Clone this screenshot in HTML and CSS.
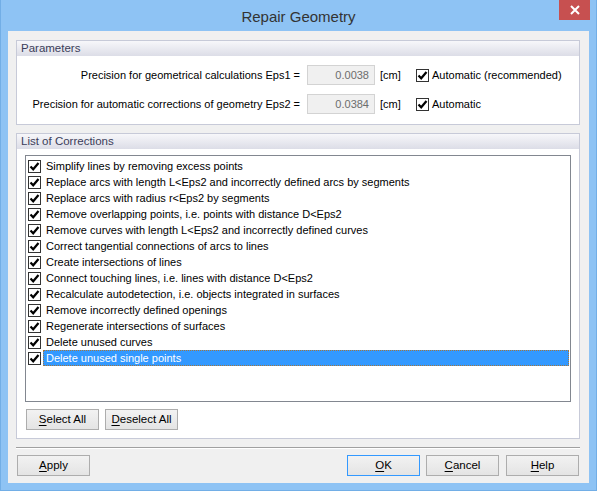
FILE: index.html
```html
<!DOCTYPE html>
<html>
<head>
<meta charset="utf-8">
<link rel="stylesheet" href="styles.css">
</head>
<body>
<div class="window">
  <div class="titlebar">
    <div class="title">Repair Geometry</div>
    <div class="close"><svg width="10" height="10" viewBox="0 0 10 10"><path d="M1 1 L9 9 M9 1 L1 9" stroke="#fff" stroke-width="2"/></svg></div>
  </div>
  <div class="client">
    <div class="group">
      <div class="group-head">Parameters</div>
      <div class="group-body params">
        <div class="plabel">Precision for geometrical calculations Eps1 =</div>
        <div class="pinput">0.0038</div>
        <div class="punit">[cm]</div>
        <div class="pcheck"><span class="cb"><svg width="11" height="11" viewBox="0 0 11 11"><path d="M1.5 5.5 L4.2 8.3 L9.5 2" fill="none" stroke="#000" stroke-width="2.2"/></svg></span><span>Automatic (recommended)</span></div>
        <div class="plabel">Precision for automatic corrections of geometry Eps2 =</div>
        <div class="pinput">0.0384</div>
        <div class="punit">[cm]</div>
        <div class="pcheck"><span class="cb"><svg width="11" height="11" viewBox="0 0 11 11"><path d="M1.5 5.5 L4.2 8.3 L9.5 2" fill="none" stroke="#000" stroke-width="2.2"/></svg></span><span>Automatic</span></div>
      </div>
    </div>
    <div class="group group-list">
      <div class="group-head">List of Corrections</div>
      <div class="group-body listbody">
        <div class="listbox">
          <div class="item"><span class="cb"><svg width="11" height="11" viewBox="0 0 11 11"><path d="M1.5 5.5 L4.2 8.3 L9.5 2" fill="none" stroke="#000" stroke-width="2.2"/></svg></span><span class="lbl">Simplify lines by removing excess points</span></div>
          <div class="item"><span class="cb"><svg width="11" height="11" viewBox="0 0 11 11"><path d="M1.5 5.5 L4.2 8.3 L9.5 2" fill="none" stroke="#000" stroke-width="2.2"/></svg></span><span class="lbl">Replace arcs with length L&lt;Eps2 and incorrectly defined arcs by segments</span></div>
          <div class="item"><span class="cb"><svg width="11" height="11" viewBox="0 0 11 11"><path d="M1.5 5.5 L4.2 8.3 L9.5 2" fill="none" stroke="#000" stroke-width="2.2"/></svg></span><span class="lbl">Replace arcs with radius r&lt;Eps2 by segments</span></div>
          <div class="item"><span class="cb"><svg width="11" height="11" viewBox="0 0 11 11"><path d="M1.5 5.5 L4.2 8.3 L9.5 2" fill="none" stroke="#000" stroke-width="2.2"/></svg></span><span class="lbl">Remove overlapping points, i.e. points with distance D&lt;Eps2</span></div>
          <div class="item"><span class="cb"><svg width="11" height="11" viewBox="0 0 11 11"><path d="M1.5 5.5 L4.2 8.3 L9.5 2" fill="none" stroke="#000" stroke-width="2.2"/></svg></span><span class="lbl">Remove curves with length L&lt;Eps2 and incorrectly defined curves</span></div>
          <div class="item"><span class="cb"><svg width="11" height="11" viewBox="0 0 11 11"><path d="M1.5 5.5 L4.2 8.3 L9.5 2" fill="none" stroke="#000" stroke-width="2.2"/></svg></span><span class="lbl">Correct tangential connections of arcs to lines</span></div>
          <div class="item"><span class="cb"><svg width="11" height="11" viewBox="0 0 11 11"><path d="M1.5 5.5 L4.2 8.3 L9.5 2" fill="none" stroke="#000" stroke-width="2.2"/></svg></span><span class="lbl">Create intersections of lines</span></div>
          <div class="item"><span class="cb"><svg width="11" height="11" viewBox="0 0 11 11"><path d="M1.5 5.5 L4.2 8.3 L9.5 2" fill="none" stroke="#000" stroke-width="2.2"/></svg></span><span class="lbl">Connect touching lines, i.e. lines with distance D&lt;Eps2</span></div>
          <div class="item"><span class="cb"><svg width="11" height="11" viewBox="0 0 11 11"><path d="M1.5 5.5 L4.2 8.3 L9.5 2" fill="none" stroke="#000" stroke-width="2.2"/></svg></span><span class="lbl">Recalculate autodetection, i.e. objects integrated in surfaces</span></div>
          <div class="item"><span class="cb"><svg width="11" height="11" viewBox="0 0 11 11"><path d="M1.5 5.5 L4.2 8.3 L9.5 2" fill="none" stroke="#000" stroke-width="2.2"/></svg></span><span class="lbl">Remove incorrectly defined openings</span></div>
          <div class="item"><span class="cb"><svg width="11" height="11" viewBox="0 0 11 11"><path d="M1.5 5.5 L4.2 8.3 L9.5 2" fill="none" stroke="#000" stroke-width="2.2"/></svg></span><span class="lbl">Regenerate intersections of surfaces</span></div>
          <div class="item"><span class="cb"><svg width="11" height="11" viewBox="0 0 11 11"><path d="M1.5 5.5 L4.2 8.3 L9.5 2" fill="none" stroke="#000" stroke-width="2.2"/></svg></span><span class="lbl">Delete unused curves</span></div>
          <div class="item selected"><span class="cb"><svg width="11" height="11" viewBox="0 0 11 11"><path d="M1.5 5.5 L4.2 8.3 L9.5 2" fill="none" stroke="#000" stroke-width="2.2"/></svg></span><span class="lbl">Delete unused single points</span></div>
        </div>
        <div class="btnrow">
          <div class="btn"><u>S</u>elect All</div>
          <div class="btn"><u>D</u>eselect All</div>
        </div>
      </div>
    </div>
    <div class="separator"></div>
    <div class="bottom">
      <div class="btn apply"><u>A</u>pply</div>
      <div class="spacer"></div>
      <div class="btn default"><u>O</u>K</div>
      <div class="btn"><u>C</u>ancel</div>
      <div class="btn help"><u>H</u>elp</div>
    </div>
  </div>
</div>
</body>
</html>
```
FILE: styles.css
```css
html, body {
  margin: 0;
  padding: 0;
}
body {
  font-family: "Liberation Sans", Arial, sans-serif;
  font-size: 11px;
  color: #000;
}
.window {
  width: 597px;
  height: 491px;
  box-sizing: border-box;
  background: #8ec3f4;
  border: 1px solid #72aee6;
  border-top: none;
  padding: 0 7px 7px 7px;
  display: flex;
  flex-direction: column;
}
.titlebar {
  height: 31px;
  display: grid;
  grid-template-columns: 1fr auto 1fr;
}
.title {
  grid-column: 2;
  font-size: 15px;
  color: #333;
  line-height: 31px;
  padding-top: 1px;
}
.close {
  grid-column: 3;
  justify-self: end;
  align-self: start;
  width: 31px;
  height: 20px;
  margin-right: -1px;
  background: #c75050;
  display: flex;
  align-items: center;
  justify-content: center;
}
.client {
  flex: 1;
  background: #f0f0f0;
  padding: 9px 9px 0 8px;
  display: flex;
  flex-direction: column;
}
.group {
  border: 1px solid #c7cad8;
  background: #fff;
}
.group-head {
  height: 15px;
  line-height: 15px;
  padding-left: 4px;
  color: #3b3d5a;
  background: linear-gradient(#f7f7fa, #dcdde7);
  font-size: 11.5px;
}
.params {
  display: grid;
  grid-template-columns: 290px 68px 41px auto;
  grid-template-rows: 20px 20px;
  column-gap: 0;
  row-gap: 9px;
  padding: 9px 0 10px 0;
  align-items: center;
}
.plabel {
  grid-column: 1;
  text-align: right;
  padding-right: 7px;
}
.pinput {
  grid-column: 2;
  height: 20px;
  box-sizing: border-box;
  border: 1px solid #d3d3d3;
  background: #f0f0f0;
  color: #6d6d6d;
  text-align: right;
  padding-right: 5px;
  line-height: 18px;
}
.punit {
  padding-left: 5px;
}
.pcheck {
  display: flex;
  align-items: center;
  gap: 3px;
}
.cb {
  width: 13px;
  height: 13px;
  box-sizing: border-box;
  border: 1px solid #333;
  background: #fff;
  display: flex;
  align-items: center;
  justify-content: center;
  flex: none;
}
.cb svg { display: block; }
.group-list {
  margin-top: 8px;
}
.listbody {
  padding: 6px 8px 8px 8px;
}
.listbox {
  height: 247px;
  box-sizing: border-box;
  border: 1px solid #828790;
  padding: 2px 1px 0 2px;
}
.item {
  height: 16px;
  display: flex;
  align-items: center;
}
.item .cb {
  margin-right: 2px;
  margin-top: 1px;
}
.lbl {
  flex: 1;
  height: 16px;
  padding-left: 2px;
  box-sizing: border-box;
  border: 1px solid transparent;
  line-height: 14px;
}
.selected .lbl {
  background: #3399ff;
  color: #fff;
  border: 1px dotted #a4763c;
}
.btnrow {
  margin-top: 7px;
  display: flex;
  gap: 6px;
  padding-left: 1px;
}
.btn {
  width: 73px;
  height: 21px;
  box-sizing: border-box;
  border: 1px solid #adadad;
  background: linear-gradient(#f2f2f2, #e4e4e4);
  text-align: center;
  line-height: 19px;
  font-size: 11.5px;
}
.btn u { text-decoration-thickness: 1px; text-underline-offset: 2px; }
.separator {
  margin-top: 8px;
  height: 1px;
  border-top: 1px solid #a0a0a0;
  background: #fff;
}
.bottom {
  margin-top: 6px;
  display: flex;
  gap: 6px;
}
.apply { margin-left: 1px; }
.spacer { flex: 1; }
.default { border-color: #3399ff; }
.help { margin-left: 1px; margin-right: 1px; }
```
